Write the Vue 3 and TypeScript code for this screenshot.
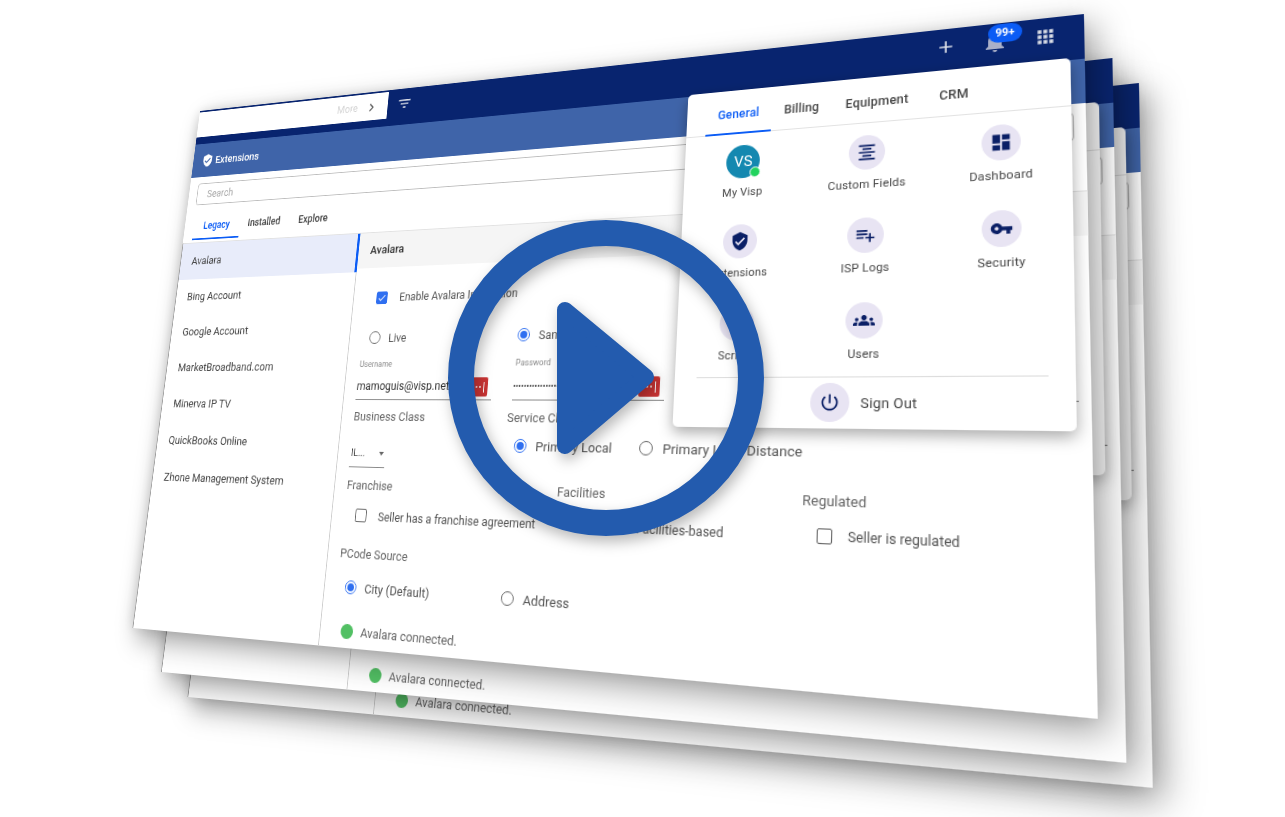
<template>
  <div class="stage">
    <div v-for="sheet in sheets" :key="sheet.id" class="sheet" :style="{ transform: sheet.matrix }">
      <div class="clip">
        <header class="topbar">
          <div class="more-tab">
            <span class="more">More</span>
            <svg class="chev" viewBox="0 0 24 24"><path :d="icons.chevron" /></svg>
          </div>
          <svg class="bar-icon filter" viewBox="0 0 24 24"><path :d="icons.filter" /></svg>
          <div class="bar-right">
            <svg class="bar-icon" viewBox="0 0 24 24"><path :d="icons.add" /></svg>
            <div class="bell">
              <svg class="bar-icon" viewBox="0 0 24 24"><path :d="icons.bell" /></svg>
              <span class="badge">99+</span>
            </div>
            <svg class="bar-icon" viewBox="0 0 24 24"><path :d="icons.apps" /></svg>
          </div>
        </header>

        <div class="title-bar">
          <svg class="title-icon" viewBox="0 0 24 24"><path :d="icons.shield" /></svg>
          <span>Extensions</span>
        </div>

        <div class="search-wrap">
          <div class="search">Search</div>
        </div>

        <nav class="tabs">
          <span class="tab active">Legacy</span>
          <span class="tab">Installed</span>
          <span class="tab">Explore</span>
        </nav>

        <div class="body">
          <aside class="sidebar">
            <div v-for="(name, i) in extensions" :key="name" class="side-row" :class="{ selected: i === 0 }">{{ name }}</div>
          </aside>

          <section class="pane">
            <div class="pane-head">Avalara</div>
            <div class="pane-body">
              <div class="row enable">
                <span class="check on"><svg viewBox="0 0 24 24"><path :d="icons.tick" /></svg></span>
                <span class="opt">Enable Avalara Integration</span>
              </div>

              <div class="row mode">
                <label class="choice live"><span class="radio"></span><span class="opt">Live</span></label>
                <label class="choice sandbox"><span class="radio on"></span><span class="opt">Sandbox</span></label>
              </div>

              <div class="creds">
                <div class="field">
                  <div class="field-label">Username</div>
                  <div class="field-value">mamoguis@visp.net</div>
                  <span class="reveal"><i></i><i></i><i></i><b></b></span>
                </div>
                <div class="field pass">
                  <div class="field-label">Password</div>
                  <div class="field-value dots">••••••••••••••••••••••</div>
                  <span class="reveal"><i></i><i></i><i></i><b></b></span>
                </div>
                <div class="field wide">
                  <div class="field-label">Company Code</div>
                  <div class="field-value">visp</div>
                </div>
              </div>

              <div class="cols-two heading">
                <div class="label">Business Class</div>
                <div class="label">Service Class</div>
              </div>

              <div class="cols-two class-row">
                <div class="select"><span>IL...</span><em></em></div>
                <div class="service">
                  <label class="choice"><span class="radio on"></span><span class="opt big">Primary Local</span></label>
                  <label class="choice"><span class="radio"></span><span class="opt big">Primary Long Distance</span></label>
                </div>
              </div>

              <div class="cols-three heading franchise">
                <div class="label">Franchise</div>
                <div class="label">Facilities</div>
                <div class="label">Regulated</div>
              </div>

              <div class="cols-three checks">
                <div class="row seller"><span class="check"></span><span class="opt">Seller has a franchise agreement</span></div>
                <div class="row based"><span class="check"></span><span class="opt">Facilities-based</span></div>
                <div class="row regulated"><span class="check"></span><span class="opt">Seller is regulated</span></div>
              </div>

              <div class="label pcode">PCode Source</div>

              <div class="row mode pcode-row">
                <label class="choice live"><span class="radio on"></span><span class="opt city">City (Default)</span></label>
                <label class="choice address"><span class="radio"></span><span class="opt big">Address</span></label>
              </div>

              <div class="status"><span class="dot"></span><span>Avalara connected.</span></div>
            </div>
          </section>
        </div>

        <div class="popup">
          <div class="pop-tabs">
            <span class="pop-tab active">General</span>
            <span class="pop-tab billing">Billing</span>
            <span class="pop-tab equipment">Equipment</span>
            <span class="pop-tab crm">CRM</span>
          </div>
          <div class="pop-grid">
            <div v-for="item in menu" :key="item.label" class="pop-item">
              <span v-if="item.avatar" class="avatar">VS<i></i></span>
              <span v-else class="pop-icon"><svg viewBox="0 0 24 24"><path :d="item.icon" /></svg></span>
              <span class="pop-label">{{ item.label }}</span>
            </div>
          </div>
          <div class="pop-line"></div>
          <div class="signout">
            <span class="pop-icon large"><svg viewBox="0 0 24 24"><path :d="icons.power" /></svg></span>
            <span>Sign Out</span>
          </div>
        </div>
      </div>
    </div>

    <svg class="play" viewBox="0 0 1285 817">
      <circle cx="606" cy="378" r="145" />
      <path d="M565 310 L646 377 L565 446 Z" />
    </svg>
  </div>
</template>

<script setup lang="ts">
type Pt = [number, number];

const W = 1000;
const H = 610;

// corners of the front sheet on screen, the other two are the same shape moved back
const front: Pt[] = [[200, 111], [1084, 14], [1098, 719], [132.5, 628]];

function toMatrix(c: Pt[]): string {
  const [[x0, y0], [x1, y1], [x2, y2], [x3, y3]] = c;
  const dx1 = x1 - x2;
  const dx2 = x3 - x2;
  const sx = x0 - x1 + x2 - x3;
  const dy1 = y1 - y2;
  const dy2 = y3 - y2;
  const sy = y0 - y1 + y2 - y3;
  const den = dx1 * dy2 - dx2 * dy1;
  const g = (sx * dy2 - dx2 * sy) / den;
  const h = (dx1 * sy - sx * dy1) / den;
  const a = x1 - x0 + g * x1;
  const b = x3 - x0 + h * x3;
  const d = y1 - y0 + g * y1;
  const e = y3 - y0 + h * y3;
  const m = [a / W, d / W, 0, g / W, b / H, e / H, 0, h / H, 0, 0, 1, 0, x0, y0, 0, 1];
  return `matrix3d(${m.join(',')})`;
}

const offsets: Pt[] = [[55, 69], [28.5, 44], [0, 0]];

const sheets = offsets.map(([ox, oy], id) => ({
  id,
  matrix: toMatrix(front.map(([x, y]): Pt => [x + ox, y + oy])),
}));

const extensions = [
  'Avalara',
  'Bing Account',
  'Google Account',
  'MarketBroadband.com',
  'Minerva IP TV',
  'QuickBooks Online',
  'Zhone Management System',
];

const icons = {
  chevron: 'M10 6L8.59 7.41 13.17 12l-4.58 4.59L10 18l6-6z',
  filter: 'M10 18h4v-2h-4v2zM3 6v2h18V6H3zm3 7h12v-2H6v2z',
  add: 'M19 13h-6v6h-2v-6H5v-2h6V5h2v6h6v2z',
  bell: 'M12 22c1.1 0 2-.9 2-2h-4c0 1.1.89 2 2 2zm6-6v-5c0-3.07-1.64-5.64-4.5-6.32V4c0-.83-.67-1.5-1.5-1.5s-1.5.67-1.5 1.5v.68C7.63 5.36 6 7.92 6 11v5l-2 2v1h16v-1l-2-2z',
  apps: 'M4 8h4V4H4v4zm6 12h4v-4h-4v4zm-6 0h4v-4H4v4zm0-6h4v-4H4v4zm6 0h4v-4h-4v4zm6-10v4h4V4h-4zm-6 4h4V4h-4v4zm6 6h4v-4h-4v4zm0 6h4v-4h-4v4z',
  shield: 'M12 1L3 5v6c0 5.55 3.84 10.74 9 12 5.16-1.26 9-6.45 9-12V5l-9-4zm-2 16l-4-4 1.41-1.41L10 14.17l6.59-6.59L18 9l-8 8z',
  tick: 'M9 16.17L4.83 12l-1.42 1.41L9 19 21 7l-1.41-1.41z',
  power: 'M13 3h-2v10h2V3zm4.83 2.17l-1.42 1.42C17.99 7.86 19 9.81 19 12c0 3.87-3.13 7-7 7s-7-3.13-7-7c0-2.19 1.01-4.14 2.58-5.42L6.17 5.17C4.23 6.82 3 9.26 3 12c0 4.97 4.03 9 9 9s9-4.03 9-9c0-2.74-1.23-5.18-3.17-6.83z',
};

const menu = [
  { label: 'My Visp', avatar: true, icon: '' },
  { label: 'Custom Fields', icon: 'M7 15v2h10v-2H7zm-4 6h18v-2H3v2zm0-8h18v-2H3v2zm4-6v2h10V7H7zM3 3v2h18V3H3z' },
  { label: 'Dashboard', icon: 'M3 13h8V3H3v10zm0 8h8v-6H3v6zm10 0h8V11h-8v10zm0-18v6h8V3h-8z' },
  { label: 'Extensions', icon: icons.shield },
  { label: 'ISP Logs', icon: 'M14 10H2v2h12v-2zm0-4H2v2h12V6zm4 8v-4h-2v4h-4v2h4v4h2v-4h4v-2h-4zM2 16h8v-2H2v2z' },
  { label: 'Security', icon: 'M12.65 10C11.83 7.67 9.61 6 7 6c-3.31 0-6 2.69-6 6s2.69 6 6 6c2.61 0 4.83-1.67 5.65-4H17v4h4v-4h2v-4H12.65zM7 14c-1.1 0-2-.9-2-2s.9-2 2-2 2 .9 2 2-.9 2-2 2z' },
  { label: 'Scripts', icon: 'M9.4 16.6L4.8 12l4.6-4.6L8 6l-6 6 6 6 1.4-1.4zm5.2 0l4.6-4.6-4.6-4.6L16 6l6 6-6 6-1.4-1.4z' },
  { label: 'Users', icon: 'M12 12.75c1.63 0 3.07.39 4.24.9 1.08.48 1.76 1.56 1.76 2.73V18H6v-1.61c0-1.18.68-2.26 1.76-2.73 1.17-.52 2.61-.91 4.24-.91zM4 13c1.1 0 2-.9 2-2s-.9-2-2-2-2 .9-2 2 .9 2 2 2zm1.13 1.1c-.37-.06-.74-.1-1.13-.1-.99 0-1.93.21-2.78.58C.48 14.9 0 15.62 0 16.43V18h4.5v-1.61c0-.83.23-1.61.63-2.29zM20 13c1.1 0 2-.9 2-2s-.9-2-2-2-2 .9-2 2 .9 2 2 2zm4 3.43c0-.81-.48-1.53-1.22-1.85-.85-.37-1.79-.58-2.78-.58-.39 0-.76.04-1.13.1.4.68.63 1.46.63 2.29V18H24v-1.57zM12 6c1.66 0 3 1.34 3 3s-1.34 3-3 3-3-1.34-3-3 1.34-3 3-3z' },
];
</script>

<style>
html,
body {
  margin: 0;
  background: #fff;
}
</style>

<style scoped>
.stage {
  position: relative;
  width: 1285px;
  height: 817px;
  overflow: hidden;
  background: #fff;
  font-family: Roboto, "Liberation Sans", sans-serif;
  color: #555;
}
.sheet {
  position: absolute;
  left: 0;
  top: 0;
  width: 1000px;
  height: 610px;
  transform-origin: 0 0;
  background: #fff;
  box-shadow: 7px 10px 28px rgba(0, 0, 0, 0.38), -3px 0 14px rgba(0, 0, 0, 0.08);
}
.clip {
  position: relative;
  display: flex;
  flex-direction: column;
  width: 100%;
  height: 100%;
  overflow: hidden;
}

.topbar {
  display: flex;
  align-items: flex-start;
  height: 43px;
  padding-top: 2px;
  box-sizing: border-box;
  background: #08246f;
}
.more-tab {
  display: flex;
  align-items: center;
  justify-content: flex-end;
  width: 268px;
  height: 32px;
  padding-right: 12px;
  box-sizing: border-box;
  background: #fff;
}
.more {
  margin-right: 9px;
  font-size: 12px;
  color: #d4d4d4;
}
.chev {
  width: 19px;
  height: 19px;
  fill: #555;
}
.bar-icon {
  display: block;
  width: 24px;
  height: 24px;
  fill: #dcdfe8;
}
.bar-right .bar-icon {
  padding: 2px;
  box-sizing: border-box;
}
.filter {
  width: 20px;
  height: 20px;
  margin: 6px 0 0 12px;
}
.bar-right {
  display: flex;
  gap: 20px;
  margin: 4px 21px 0 auto;
}
.bell {
  position: relative;
}
.bell .bar-icon {
  padding: 0;
  fill: #aab0c8;
}
.badge {
  position: absolute;
  left: 6px;
  top: -5px;
  width: 30px;
  height: 18px;
  border-radius: 9px;
  background: #0b5cf5;
  color: #fff;
  font-size: 10px;
  font-weight: 700;
  line-height: 18px;
  text-align: center;
}

.title-bar {
  display: flex;
  align-items: center;
  gap: 3px;
  height: 42px;
  padding-left: 13px;
  background: #3f64a9;
  color: #fff;
  font-size: 13px;
  font-weight: 500;
}
.title-icon {
  width: 17px;
  height: 17px;
  fill: #fff;
}

.search-wrap {
  padding: 8px 10px 0 12px;
}
.search {
  height: 27px;
  padding-left: 14px;
  box-sizing: border-box;
  border: 1px solid #bdbdbd;
  border-radius: 4px;
  font-size: 12.5px;
  line-height: 25px;
  color: #a8a8a8;
}

.tabs {
  display: flex;
  height: 46px;
  padding-left: 13px;
  box-sizing: border-box;
}
.tab {
  width: 68px;
  height: 43px;
  box-sizing: border-box;
  padding-top: 19px;
  font-size: 12px;
  font-weight: 500;
  text-align: center;
  color: #444;
}
.tab.active {
  color: #0b5cf5;
  border-bottom: 2px solid #0b5cf5;
}

.body {
  display: flex;
  flex: 1;
  min-height: 0;
}
.sidebar {
  flex: none;
  width: 249px;
  box-sizing: border-box;
  border-left: 1px solid #8e8e8e;
  border-right: 1px solid #ccc;
  border-top: 1px solid #e2e2e2;
}
.side-row {
  height: 42px;
  margin-right: -1px;
  padding-left: 16px;
  box-sizing: border-box;
  font-size: 13.2px;
  line-height: 42px;
  color: #444;
}
.side-row.selected {
  height: 44px;
  line-height: 44px;
  background: #e8ecfa;
  border-right: 3px solid #0b5cf5;
}

.pane {
  flex: 1;
  min-width: 0;
}
.pane-head {
  height: 41px;
  padding-left: 15px;
  background: #f5f5f5;
  border-top: 1px solid #e2e2e2;
  box-sizing: border-box;
  font-size: 13px;
  font-weight: 500;
  line-height: 39px;
  color: #333;
}
.pane-body {
  padding-left: 15px;
}

.row {
  display: flex;
  align-items: center;
  height: 24px;
}
.enable {
  margin-top: 22px;
  padding-left: 14px;
}
.mode {
  margin-top: 20px;
}
.choice {
  display: flex;
  align-items: center;
  gap: 10px;
}
.live {
  margin-left: 10px;
  width: 179px;
}
.radio {
  flex: none;
  position: relative;
  width: 14px;
  height: 14px;
  box-sizing: border-box;
  border: 1.5px solid #666;
  border-radius: 50%;
}
.radio.on {
  border-color: #2f6ff0;
}
.radio.on::after {
  content: "";
  position: absolute;
  inset: 2px;
  border-radius: 50%;
  background: #2f6ff0;
}
.check {
  flex: none;
  display: block;
  width: 14px;
  height: 14px;
  box-sizing: border-box;
  border: 1.5px solid #666;
  border-radius: 2px;
}
.check.on {
  background: #2f6ff0;
  border-color: #2f6ff0;
}
.check svg {
  display: block;
  width: 100%;
  height: 100%;
  fill: #fff;
}
.opt {
  font-size: 12.5px;
  color: #555;
  white-space: nowrap;
}
.opt.city {
  font-size: 13.2px;
}
.opt.big {
  font-size: 13.5px;
}
.enable .opt,
.checks .opt {
  margin-left: 14px;
}
.enable .opt {
  margin-left: 15px;
  font-size: 12.3px;
}

.creds {
  display: flex;
  gap: 24px;
  margin-top: 11px;
}
.field {
  position: relative;
  flex: none;
  width: 164px;
  height: 45px;
  box-sizing: border-box;
  border-bottom: 1px solid #888;
}
.field.wide {
  width: 350px;
}
.field-label {
  height: 12px;
  padding-left: 1px;
  font-size: 9px;
  line-height: 12px;
  color: #888;
}
.field-value {
  margin-top: 8px;
  font-size: 12.5px;
  line-height: 20px;
  color: #333;
}
.dots {
  font-size: 9px;
}
.reveal {
  position: absolute;
  right: 5px;
  bottom: 3px;
  display: flex;
  align-items: center;
  justify-content: center;
  gap: 2px;
  width: 22px;
  height: 20px;
  border-radius: 2px;
  background: #c93434;
}
.reveal i {
  width: 2px;
  height: 2px;
  border-radius: 50%;
  background: #fff;
}
.reveal b {
  width: 1px;
  height: 11px;
  margin-left: 1px;
  background: #fff;
}

.cols-two {
  display: grid;
  grid-template-columns: 184px 1fr;
}
.cols-three {
  display: grid;
  grid-template-columns: 245px 245px 1fr;
}
.label {
  height: 16px;
  font-size: 13px;
  line-height: 16px;
  color: #666;
  white-space: nowrap;
}
.heading {
  margin-top: 10px;
}
.class-row {
  height: 46px;
  margin-top: 2px;
}
.select {
  display: flex;
  align-items: center;
  justify-content: space-between;
  align-self: end;
  width: 44px;
  height: 27px;
  margin-bottom: 2px;
  box-sizing: border-box;
  border-bottom: 1px solid #888;
  padding: 0 2px 3px 1px;
  font-size: 11px;
  color: #444;
}
.select em {
  width: 0;
  height: 0;
  border: 3px solid transparent;
  border-top: 4px solid #666;
  margin-top: 4px;
}
.service {
  display: flex;
  height: 24px;
  margin: 6px 0 0 10px;
}
.service .choice:first-child {
  width: 135px;
}
.franchise {
  margin-top: 9px;
}
.checks {
  margin-top: 11px;
}
.seller {
  padding-left: 14px;
}
.based {
  padding-left: 57px;
}
.regulated {
  padding-left: 14px;
}
.regulated .opt {
  font-size: 12.2px;
}
.pcode {
  margin-top: 20px;
}
.pcode-row {
  margin-top: 14px;
}
.address {
  margin-left: 3px;
}
.status {
  display: flex;
  align-items: center;
  gap: 9px;
  height: 22px;
  margin-top: 21px;
  margin-left: 10px;
  font-size: 13.3px;
  color: #666;
}
.dot {
  width: 15px;
  height: 15px;
  border-radius: 50%;
  background: #52c064;
}

.popup {
  position: absolute;
  left: 626px;
  top: 41px;
  width: 362px;
  height: 337px;
  border-radius: 5px;
  background: #fff;
  box-shadow: 0 5px 14px rgba(0, 0, 0, 0.34);
}
.pop-tabs {
  position: relative;
  display: flex;
  height: 46px;
  padding-left: 20px;
  box-sizing: border-box;
  border-bottom: 1px solid #e2e2e2;
}
.pop-tab {
  width: 67px;
  height: 46px;
  box-sizing: border-box;
  padding-top: 18px;
  font-size: 12px;
  font-weight: 500;
  letter-spacing: 0.2px;
  text-align: center;
  color: #444;
}
.pop-tab.active {
  color: #0b5cf5;
  border-bottom: 2px solid #0b5cf5;
}
.billing {
  width: 60px;
}
.equipment {
  width: 85px;
}
.crm {
  width: 57px;
}
.pop-grid {
  display: grid;
  grid-template-columns: repeat(3, 1fr);
  row-gap: 24px;
  padding-top: 12px;
}
.pop-item {
  display: flex;
  flex-direction: column;
  align-items: center;
  gap: 7px;
  height: 57px;
}
.pop-icon {
  display: flex;
  align-items: center;
  justify-content: center;
  width: 34px;
  height: 34px;
  border-radius: 50%;
  background: #e8e4f3;
}
.pop-icon svg {
  width: 20px;
  height: 20px;
  fill: #0a1f66;
}
.pop-icon.large {
  width: 36px;
  height: 36px;
}
.avatar {
  position: relative;
  width: 34px;
  height: 34px;
  border-radius: 50%;
  background: #1488b0;
  color: #fff;
  font-size: 15px;
  line-height: 34px;
  text-align: center;
}
.avatar i {
  position: absolute;
  right: -1px;
  bottom: 0;
  width: 9px;
  height: 9px;
  border: 1.5px solid #fff;
  border-radius: 50%;
  background: #22d35e;
}
.pop-label {
  font-size: 11px;
  line-height: 16px;
  letter-spacing: 0.2px;
  color: #444;
  white-space: nowrap;
}
.pop-line {
  height: 1px;
  margin: 12px 22px 0;
  background: #ddd;
}
.signout {
  display: flex;
  align-items: center;
  gap: 10px;
  padding: 5px 0 0 133px;
  font-size: 13px;
  letter-spacing: 0.2px;
  color: #444;
}

.play {
  position: absolute;
  left: 0;
  top: 0;
  width: 1285px;
  height: 817px;
  filter: drop-shadow(3px 6px 7px rgba(0, 0, 0, 0.28));
}
.play circle {
  fill: none;
  stroke: #235bae;
  stroke-width: 26;
}
.play path {
  fill: #235bae;
  stroke: #235bae;
  stroke-width: 16;
  stroke-linejoin: round;
}
</style>
